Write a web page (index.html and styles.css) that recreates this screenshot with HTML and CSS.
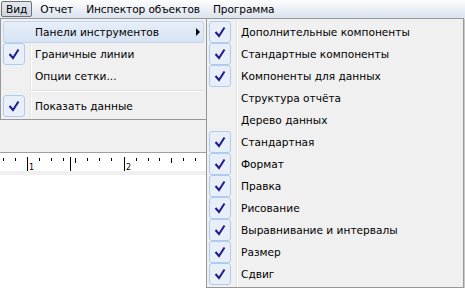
FILE: index.html
```html
<!DOCTYPE html>
<html lang="ru">
<head>
    <meta charset="UTF-8">
    <title>Вид</title>
    <link rel="stylesheet" href="styles.css">
</head>
<body>
    <div class="app">
        <div class="menubar">
            <span class="mb-item active">Вид</span>
            <span class="mb-item">Отчет</span>
            <span class="mb-item">Инспектор объектов</span>
            <span class="mb-item">Программа</span>
        </div>
        <div class="toolbar-area"></div>
        <div class="ruler">
            <svg width="465" height="18" viewBox="0 0 465 18">
                <g stroke="#000" stroke-width="1">
                    <line x1="3.5" y1="5" x2="3.5" y2="8"/>
                    <line x1="15.5" y1="5" x2="15.5" y2="8"/>
                    <line x1="27.5" y1="4" x2="27.5" y2="18"/>
                    <line x1="39.5" y1="5" x2="39.5" y2="8"/>
                    <line x1="51.5" y1="5" x2="51.5" y2="8"/>
                    <line x1="63.5" y1="5" x2="63.5" y2="8"/>
                    <line x1="70.5" y1="4" x2="70.5" y2="18"/>
                    <line x1="75.5" y1="5" x2="75.5" y2="10"/>
                    <line x1="87.5" y1="5" x2="87.5" y2="8"/>
                    <line x1="99.5" y1="5" x2="99.5" y2="8"/>
                    <line x1="111.5" y1="5" x2="111.5" y2="8"/>
                    <line x1="124.5" y1="4" x2="124.5" y2="18"/>
                    <line x1="136.5" y1="5" x2="136.5" y2="8"/>
                    <line x1="148.5" y1="5" x2="148.5" y2="8"/>
                    <line x1="159.5" y1="5" x2="159.5" y2="8"/>
                    <line x1="171.5" y1="5" x2="171.5" y2="10"/>
                    <line x1="183.5" y1="5" x2="183.5" y2="8"/>
                    <line x1="195.5" y1="5" x2="195.5" y2="8"/>
                </g>
                <text x="29" y="17" class="ruler-num">1</text>
                <text x="126" y="17" class="ruler-num">2</text>
            </svg>
        </div>
        <div class="ruler-gap"></div>
        <div class="canvas"></div>

        <!-- меню Вид -->
        <div class="menu main">
            <div class="item hot">
                <span class="chk"></span>
                <span class="label">Панели инструментов</span>
                <span class="arrow"></span>
            </div>
            <div class="item">
                <span class="chk on"><svg width="22" height="22"><polyline points="6.5,11 10,15 15.5,6.5"/></svg></span>
                <span class="label">Граничные линии</span>
            </div>
            <div class="item">
                <span class="chk"></span>
                <span class="label">Опции сетки...</span>
            </div>
            <div class="sep"></div>
            <div class="item">
                <span class="chk on"><svg width="22" height="22"><polyline points="6.5,11 10,15 15.5,6.5"/></svg></span>
                <span class="label">Показать данные</span>
            </div>
        </div>

        <!-- подменю Панели инструментов -->
        <div class="menu sub">
            <div class="item">
                <span class="chk on"><svg width="22" height="22"><polyline points="6.5,11 10,15 15.5,6.5"/></svg></span>
                <span class="label">Дополнительные компоненты</span>
            </div>
            <div class="item">
                <span class="chk on"><svg width="22" height="22"><polyline points="6.5,11 10,15 15.5,6.5"/></svg></span>
                <span class="label">Стандартные компоненты</span>
            </div>
            <div class="item">
                <span class="chk on"><svg width="22" height="22"><polyline points="6.5,11 10,15 15.5,6.5"/></svg></span>
                <span class="label">Компоненты для данных</span>
            </div>
            <div class="item">
                <span class="chk"></span>
                <span class="label">Структура отчёта</span>
            </div>
            <div class="item">
                <span class="chk"></span>
                <span class="label">Дерево данных</span>
            </div>
            <div class="item">
                <span class="chk on"><svg width="22" height="22"><polyline points="6.5,11 10,15 15.5,6.5"/></svg></span>
                <span class="label">Стандартная</span>
            </div>
            <div class="item">
                <span class="chk on"><svg width="22" height="22"><polyline points="6.5,11 10,15 15.5,6.5"/></svg></span>
                <span class="label">Формат</span>
            </div>
            <div class="item">
                <span class="chk on"><svg width="22" height="22"><polyline points="6.5,11 10,15 15.5,6.5"/></svg></span>
                <span class="label">Правка</span>
            </div>
            <div class="item">
                <span class="chk on"><svg width="22" height="22"><polyline points="6.5,11 10,15 15.5,6.5"/></svg></span>
                <span class="label">Рисование</span>
            </div>
            <div class="item">
                <span class="chk on"><svg width="22" height="22"><polyline points="6.5,11 10,15 15.5,6.5"/></svg></span>
                <span class="label">Выравнивание и интервалы</span>
            </div>
            <div class="item">
                <span class="chk on"><svg width="22" height="22"><polyline points="6.5,11 10,15 15.5,6.5"/></svg></span>
                <span class="label">Размер</span>
            </div>
            <div class="item">
                <span class="chk on"><svg width="22" height="22"><polyline points="6.5,11 10,15 15.5,6.5"/></svg></span>
                <span class="label">Сдвиг</span>
            </div>
        </div>
    </div>
</body>
</html>
```

FILE: styles.css
```css
body {
    margin: 0;
    padding: 0;
    font-family: "DejaVu Sans", sans-serif;
    font-size: 10.6px;
    color: #000;
    background-color: #fff;
}

.app {
    position: relative;
    width: 465px;
    height: 288px;
    overflow: hidden;
    display: flex;
    flex-direction: column;
}

.menubar {
    height: 18px;
    flex: none;
    display: flex;
    align-items: center;
    gap: 3px;
    padding-left: 1px;
    box-sizing: border-box;
    letter-spacing: -0.1px;
    background: linear-gradient(#fcfdfe, #dbe3ee);
}

.mb-item {
    height: 16px;
    line-height: 14px;
    padding: 0 4px;
    border: 1px solid transparent;
    box-sizing: border-box;
}

.mb-item.active {
    border-color: #6e7278;
    border-radius: 2px;
    background: linear-gradient(#e4e8ee, #cfd6df);
}

.toolbar-area {
    height: 134px;
    flex: none;
    background-color: #f0f0f0;
    border-bottom: 1px solid #a0a0a0;
}

.ruler {
    height: 18px;
    flex: none;
    background-color: #fff;
}

.ruler svg {
    display: block;
}

.ruler-num {
    font-family: "DejaVu Sans", sans-serif;
    font-size: 8px;
}

.ruler-gap {
    height: 4px;
    flex: none;
    background-color: #f0f0f0;
}

.canvas {
    flex: 1;
    background-color: #fff;
}

.menu {
    position: absolute;
    top: 18px;
    padding: 2px;
    border: 1px solid #979797;
    background:
        linear-gradient(to right, transparent 29px, #e2e3e3 29px, #e2e3e3 30px, #fff 30px, #fff 31px, transparent 31px),
        #f0f0f0;
}

.menu.main {
    left: 0;
    width: 201px;
}

.menu.sub {
    left: 206px;
    width: 252px;
    height: 264px;
    box-shadow: 1px 1px 0 #c8c8c8;
}

.item {
    height: 22px;
    display: flex;
    align-items: center;
    position: relative;
}

.item.hot {
    border-radius: 3px;
    background: linear-gradient(#e6eef9, #d7e3f4);
    box-shadow: inset 0 0 0 1px #c3d5ee;
}

.chk {
    width: 22px;
    height: 22px;
    flex: none;
    box-sizing: border-box;
}

.chk.on {
    border: 1px solid #aecbf0;
    border-radius: 3px;
    background-color: #e8eff9;
}

.chk svg {
    display: block;
    margin: -1px;
}

.chk polyline {
    fill: none;
    stroke: #1d1d8f;
    stroke-width: 2;
}

.label {
    padding-left: 10px;
    white-space: nowrap;
}

.arrow {
    margin-left: auto;
    margin-right: 4px;
    width: 0;
    height: 0;
    border-left: 4px solid #000;
    border-top: 4px solid transparent;
    border-bottom: 4px solid transparent;
}

.sep {
    height: 8px;
    margin-left: 27px;
    background: linear-gradient(transparent 3px, #e0e0e0 3px, #e0e0e0 4px, #fff 4px, #fff 5px, transparent 5px);
}
```
